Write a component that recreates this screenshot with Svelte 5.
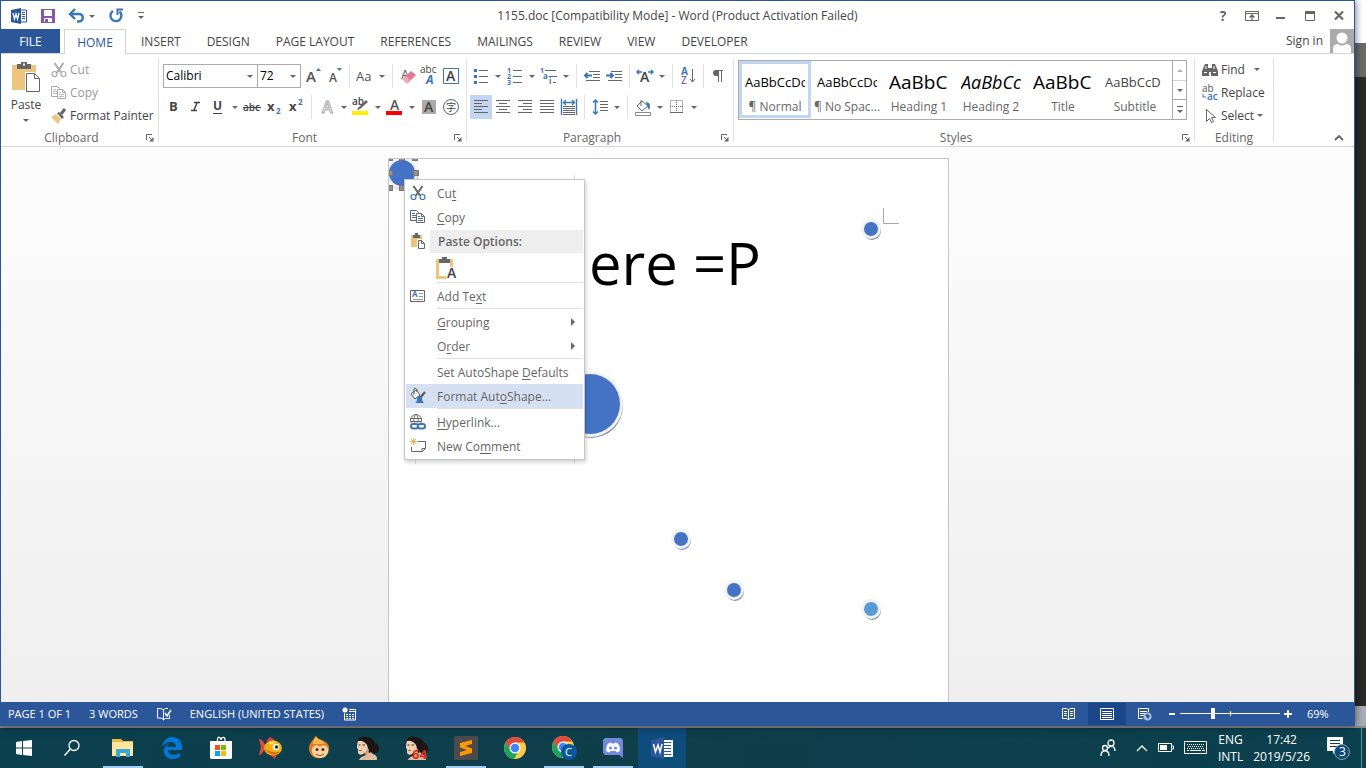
<script>
  const G = '#666';
  const B = '#3b76b5';
  const line = (x1, y, x2, c = G, w = 1) => `<path d="M${x1} ${y}.5H${x2}" stroke="${c}" stroke-width="${w}"/>`;
  const letter = (t, x, y, size, fill = '#555', extra = '') =>
    `<text x="${x}" y="${y}" font-size="${size}" fill="${fill}" font-family="Open Sans, sans-serif" ${extra}>${t}</text>`;
  const svg = (w, h, body) =>
    `<svg width="${w}" height="${h}" viewBox="0 0 ${w} ${h}" fill="none" aria-hidden="true" style="display:block;overflow:visible">${body}</svg>`;
  const tool = (body) => svg(22, 24, body);
  const small = (body) => svg(16, 16, body);

  const scissors = (c, d) =>
    small(`<path d="M3.500 1 10 10.500M12.500 1 6 10.500" stroke="${c}" stroke-width="2"/><circle cx="3.500" cy="12" r="2.500" stroke="${d}" stroke-width="1.200"/><circle cx="12.500" cy="12" r="2.500" stroke="${d}" stroke-width="1.200"/>`);
  const copy = (c, d) =>
    small(`<path d="M.5 1.500h6l2 2v8h-8z" fill="#fff" stroke="${c}"/><path d="M2 4.500h3M2 6.500h4M2 8.500h4" stroke="${d}"/><path d="M6.500 4.500h5l3 3v6h-8z" fill="#fff" stroke="${c}"/><path d="M11.500 4.500v3h3" stroke="${c}"/><path d="M8 7.500h2M8 9.500h5M8 11.500h5" stroke="${d}"/>`);
  const head = (red) =>
    svg(24, 24, `<path d="M3 24c1-3 5-4 7-5l-1-3 6-3c0 4 1 5 4 6 2 1 2 3 2 5z" fill="#e3bb9b"/><path d="M2 5c-1 3-1 4-1 7l1 1v4c1 2 3 2 5 1l6-5 1-7-5-4z" fill="#efd0b4"/><path d="M1 5C2 1 6 0 10 1c5 0 8 3 9 6 3 1 5 4 4 7-1 4-5 4-7 2l-3 1c-1-3-1-5-2-8C9 6 6 4 1 5z" fill="#1c1514"/><path d="M2.500 9h2M6.500 9h2.500" stroke="#4b2d22"/><path d="M3 14.500h3" stroke="#b9574c"/><path d="M11 10c1 3 0 6-3 8l3 1 2-5z" fill="#cf9f7f"/>${red ? letter('64', 7, 23, 13, '#d62c1b', 'font-weight="700"') : ''}`);
  const chrome = `<circle cx="12" cy="12" r="11" fill="#ffcd45"/><path d="M2.500 6.500A11 11 0 0 0 11 23l5-8.500-8 0z" fill="#1ca45c"/><path d="M12 6.500h9.500A11 11 0 0 0 2.500 6.500L7.500 14z" fill="#dd4b3e"/><circle cx="12" cy="12" r="5.500" fill="#fff"/><circle cx="12" cy="12" r="4.300" fill="#4285f4"/>`;

  const ic = {
    word: small(`<path d="M9 2h6.500v12H9z" fill="#fff" stroke="#2b579a"/><path d="M11 4.500h3M11 6.500h3M11 8.500h3M11 10.500h3" stroke="#2b579a"/><path d="M0 2 10 0v16L0 14z" fill="#2b579a"/><path d="m2 5 1.500 6L5 6l1.500 5L8 5" stroke="#fff" stroke-width="1.300"/>`),
    save: small(`<path d="M1 1h14v14H1z" fill="#8656aa"/><path d="M4 2h8v6H4zM4 10h8v4H4z" fill="#fff"/><path d="M5 11h3v3H5z" fill="#8656aa"/>`),
    undo: small(`<path d="M2 6h8c5 0 5 7 0 7.500H8" stroke="${B}" stroke-width="2.400"/><path d="m6 1-5 5 5 5" stroke="${B}" stroke-width="2.400"/>`),
    redo: small(`<path d="M5 3a5.500 5.500 0 1 0 6.500 .5" stroke="${B}" stroke-width="2.400"/><path d="M15 1.500H9.500V7" stroke="${B}" stroke-width="2"/>`),
    custom: svg(8, 10, `<path d="M1 1.500h6" stroke="#666"/><path d="M1 5h6L4 8z" fill="#666"/>`),
    display: small(`<path d="M1.500 3.500h13v9h-13zM1.500 5.500h13" stroke="#666"/><path d="M8 12V7M5.500 9.500 8 7l2.500 2.500" stroke="#666" stroke-width="1.300"/>`),
    min: small(`<path d="M3 10h9" stroke="#666" stroke-width="2"/>`),
    max: small(`<path d="M3.500 3.500h9v9h-9z" stroke="#666"/><path d="M3 4.500h10" stroke="#666" stroke-width="3"/>`),
    close: small(`<path d="m4 3.500 8 8M12 3.500l-8 8" stroke="#666" stroke-width="2.200"/>`),
    user: svg(24, 24, `<path d="M0 0h24v24H0z" fill="#ababab"/><circle cx="12" cy="9" r="5.500" fill="#fff"/><path d="M3 24v-5c0-2 2-4 5-4 2 2 6 2 8 0 3 0 5 2 5 4v5z" fill="#fff"/>`),
    paste: svg(30, 32, `<path d="M1 4h24v25H1z" fill="#ecc57e"/><path d="M6 3h4V1h6v2h4v5H6z" fill="#666"/><path d="M12 2.500h2v2h-2z" fill="#fff"/><path d="M14 11h10l6 6v15H14z" fill="#fff"/><path d="M15.500 12.500h8l5 5v13h-13z" fill="#fff" stroke="#666"/><path d="M23.500 12.500v5h5" stroke="#666"/>`),
    cutGrey: scissors('#aaa', '#aaa'),
    copyGrey: copy('#aaa', '#bbb'),
    brush: small(`<path d="m0 9 5-3 5 5-3 5z" fill="#ecc57e"/><path d="m6 5 2-1 5 5-2 2z" fill="#666"/><path d="m10 6 4-5" stroke="#666" stroke-width="3"/>`),
    grow: tool(letter('A', 5, 18, 15, '#555', 'font-weight="600"') + `<path d="m15 7 2.500-3L20 7z" fill="${B}"/>`),
    shrink: tool(letter('A', 6, 18, 12, '#555', 'font-weight="600"') + `<path d="m14 4 2.500 3L19 4z" fill="${B}"/>`),
    case: tool(letter('Aa', 2, 17, 13, '#555', 'font-weight="500"')),
    erase: tool(letter('A', 4, 15, 13) + `<path d="m6 14 8-7 5 4-8 8z" fill="#e37c91"/><path d="m5 15 4-3 4 4-3 4z" fill="#eeaab8"/>`),
    phon: tool(letter('abc', 1, 9, 10, '#444', 'font-weight="500"') + letter('A', 7, 20, 12, B, 'font-weight="700" font-style="italic"')),
    boxA: tool(`<path d="M2.500 4.500h15v15h-15z" stroke="${B}"/>` + letter('A', 5, 17, 14, '#444', 'font-weight="600"')),
    bold: tool(letter('B', 6, 16, 13, '#444', 'font-weight="700"')),
    italic: tool(`<path d="M9 7.500h6M6 15.500h6M12.500 7l-4 9" stroke="#444" stroke-width="1.500"/>`),
    under: tool(letter('U', 6, 15, 12, '#444', 'font-weight="700"') + line(6, 18, 15, '#444')),
    strike: tool(letter('abc', 2, 16, 10, '#444', 'font-weight="600"') + line(2, 12, 20, '#444')),
    sub: tool(letter('x', 4, 16, 13, '#444', 'font-weight="700"') + letter('2', 13, 19, 8, B, 'font-weight="700"')),
    sup: tool(letter('x', 4, 16, 13, '#444', 'font-weight="700"') + letter('2', 13, 10, 8, B, 'font-weight="700"')),
    glow: tool(`<text x="6" y="18" font-size="16" font-family="Open Sans" font-weight="600" fill="#fff" stroke="#aaa" stroke-width="1">A</text>`),
    high: tool(letter('ab', 2, 10, 10, '#444', 'font-weight="600"') + `<path d="m8 13 8-8 2 2-8 7-3 1z" fill="#666"/><path d="M2 16h16v4H2z" fill="#ffef00"/>`),
    color: tool(letter('A', 6, 15, 14, '#555', 'font-weight="600"') + `<path d="M2 16h16v4H2z" fill="#f00"/>`),
    shadeA: tool(`<path d="M4 5h14v14H4z" fill="#aaa"/>` + letter('A', 6, 17, 14, '#444', 'font-weight="600"')),
    circle: tool(`<circle cx="11" cy="12" r="7.500" stroke="#666"/><text x="6" y="16" font-size="10" fill="#444" font-family="Noto Sans CJK SC">字</text>`),
    bullets: tool(`<path d="M4 5h3v3H4zM4 11h3v3H4zM4 17h3v3H4z" fill="${B}"/>` + line(9, 6, 18) + line(9, 12, 18) + line(9, 18, 18)),
    numbers: tool(letter('1', 3, 9, 7, B, 'font-weight="700"') + letter('2', 3, 15, 7, B, 'font-weight="700"') + letter('3', 3, 21, 7, B, 'font-weight="700"') + line(9, 6, 18) + line(9, 12, 18) + line(9, 18, 18)),
    multi: tool(letter('1', 2, 9, 7, B, 'font-weight="700"') + letter('a', 5, 15, 8, B, 'font-weight="700"') + letter('i', 11, 20, 8, B, 'font-weight="700"') + line(7, 6, 18) + line(11, 12, 19) + line(15, 18, 18)),
    outdent: tool(line(8, 7, 19) + line(12, 10, 19) + line(12, 13, 19) + line(5, 16, 19) + `<path d="M11 11.500H4M6.500 9 4 11.500 6.500 14" stroke="${B}" stroke-width="2"/>`),
    indent: tool(line(8, 7, 19) + line(12, 10, 19) + line(12, 13, 19) + line(5, 16, 19) + `<path d="M3 11.500h7M7.500 9 10 11.500 7.500 14" stroke="${B}" stroke-width="2"/>`),
    asian: tool(letter('A', 6, 18, 14, '#444', 'font-weight="600"') + `<path d="M8 8H3M5 6 3 8l2 2M14 8h5M17 6l2 2-2 2" stroke="${B}" stroke-width="1.500"/>`),
    sort: tool(letter('A', 4, 11, 10, B, 'font-weight="700"') + letter('Z', 4, 20, 10, '#8656aa', 'font-weight="600"') + `<path d="M15.500 5v13M13 15l2.500 3 2.500-3" stroke="#666"/>`),
    pilcrow: tool(`<path d="M8 6.500h7M10.500 6v12M13.500 6v12" stroke="#666"/><path d="M10 6H8a3 3 0 0 0 0 6h2z" fill="#666"/>`),
    left: tool([5, 8, 11, 14, 17].map((y, i) => line(4, y, i % 2 ? 12 : 18)).join('')),
    center: tool([5, 8, 11, 14, 17].map((y, i) => (i % 2 ? line(7, y, 15) : line(4, y, 18))).join('')),
    right: tool([5, 8, 11, 14, 17].map((y, i) => line(i % 2 ? 9 : 4, y, 18)).join('')),
    justify: tool([5, 8, 11, 14, 17].map((y) => line(4, y, 18)).join('')),
    distrib: tool(`<path d="M3.500 4v16M18.500 4v16M5 7.500h12M8 5 5.500 7.500 8 10M14 5l2.500 2.500L14 10" stroke="${B}" stroke-width="1.400"/>` + [11, 13, 15, 17, 19].map((y) => line(5, y, 17)).join('')),
    spacing: tool(`<path d="M6.500 5v14M4 7.500 6.500 5 9 7.500M4 16.500 6.500 19 9 16.500" stroke="${B}" stroke-width="1.500"/>` + [6, 9, 12, 15].map((y) => line(11, y, 19)).join('')),
    shading: tool(`<path d="m5 11 5-5 6 5-6 5zM9 11V5" stroke="#666" fill="#fff"/><path d="M14 7c4 0 5 4 3 8l-2-4z" fill="${B}"/><path d="M3.500 17.500h15v3h-15z" stroke="#888"/>`),
    border: tool(`<path d="M4.500 5.500h12v12h-12zM10.500 5v13M4 11.500h13" stroke="#666" stroke-dasharray="1 1"/>` + line(4, 17, 17)),
    find: small(`<path d="M3 2h3v4h4V2h3l3 7v5H9v-4H7v4H0V9z" fill="#666"/><path d="M2 10.500h3M11 10.500h3M4 4v3M12 4v3" stroke="#fff"/>`),
    replace: svg(16, 18, letter('ab', 0, 8, 10, '#555') + letter('ac', 5, 16, 10, B, 'font-weight="600"') + `<path d="M1 10v3h3" stroke="${B}"/>`),
    select: small(`<path d="M4.500 1.500v12l3-3 2 4 2-1-2-4h4z" fill="#fff" stroke="#666"/>`),
    launch: svg(8, 8, `<path d="M.5 6V.5H6M3 3l3 3" stroke="#666"/><path d="M7.500 3v4.500H3z" fill="#666"/>`),
    up: svg(10, 6, `<path d="m1 5 4-4 4 4" stroke="#666" stroke-width="1.800"/>`),
    cut: scissors('#666', B),
    copy: copy('#666', B),
    pasteSmall: small(`<path d="M1 2h11v12H1z" fill="#ecc57e"/><path d="M3 2h2V0h3v2h2v3H3z" fill="#666"/><path d="M7 6h5l4 4v6H7z" fill="#fff"/><path d="M8.500 7.500h3l3 3v5h-6z" fill="#fff" stroke="#666"/><path d="M11.500 7.500v3h3" stroke="#666"/>`),
    pasteText: svg(24, 24, `<path d="M2.500 4.500h14v17h-14z" fill="#fff" stroke="#ecc57e" stroke-width="3"/><path d="M4 3h3V1h5v2h3v4H4z" fill="#666"/><path d="M11 11h11v13H11z" fill="#fff"/>` + letter('A', 12, 22, 14, '#444', 'font-weight="600"')),
    addText: small(`<path d="M.5 2.500h14v11H.5z" stroke="#666" fill="#fff"/><path d="M9 5.500h4M9 8.500h4M3 11.500h10" stroke="#999"/>` + letter('A', 2, 9, 8, B, 'font-weight="700"')),
    format: small(`<path d="M1 6 6 2l4 5-5 4zM4 7V1c0-1 3-1 3 1v2" stroke="#555" fill="#fff"/><path d="m15 4-5 6" stroke="#555" stroke-width="2"/><path d="M8 8c3 0 5 2 4 4l2 3H5c3-1 1-4 3-7z" fill="${B}"/>`),
    link: small(`<circle cx="6" cy="6" r="5.500" stroke="#666"/><path d="M.5 4.500h11M.5 7.500h11M6 .5c-3 3-3 7 0 11 3-4 3-8 0-11z" stroke="#666"/><path d="M0 9h16v7H0z" fill="#fff"/><rect x="1" y="10" width="7" height="4.500" rx="2.200" stroke="${B}" stroke-width="2"/><rect x="8" y="10" width="7" height="4.500" rx="2.200" stroke="${B}" stroke-width="2"/>`),
    comment: small(`<path d="M8 3.500h7.500v7l-3 3h-11V9M15 10.500h-3v3" stroke="#666"/><path d="M3.500 0v7M0 3.500h7M1 1l5 5M6 1 1 6" stroke="#e7b45a"/>`),
    proof: small(`<path d="M7.500 13.500 5 12H1.500V2.500H5l2.500 1.500v10l2-1.500h4V9M7.500 4 9 2.500h3" stroke="#fff"/><path d="m9 7 2 3 4-6" stroke="#fff" stroke-width="1.500"/>`),
    macro: svg(14, 14, `<path d="M2.500 6v7h11V2.500H7" stroke="#fff"/><circle cx="3" cy="3" r="2.500" fill="#fff"/><path d="M7 4.500h6M4 7.500h2M7 7.500h2M10 7.500h2M4 9.500h2M7 9.500h2M10 9.500h2M4 11.500h2M7 11.500h2M10 11.500h2" stroke="#fff"/>`),
    read: svg(14, 14, `<path d="M6.500 13V3L5 1.500H.5v10H5L6.500 13 8 11.500h4.500v-10H8L6.500 3M2 4.500h3M2 6.500h3M2 8.500h3M8 4.500h3M8 6.500h3M8 8.500h3" stroke="#fff"/>`),
    print: svg(14, 14, `<path d="M.5 1.500h13v11H.5zM2 4.500h10M2 6.500h10M2 8.500h10M2 10.500h10" stroke="#fff"/>`),
    web: svg(14, 14, `<path d="M5 11.500H.5v-10h10V5M2 4.500h7M2 6.500h5M2 8.500h4" stroke="#fff"/><circle cx="9.500" cy="9.500" r="4" fill="#a9bfe0"/><path d="m7 8 3-1 2 2-2 3z" fill="#2b579a"/>`),
    people: svg(16, 18, `<circle cx="11" cy="4" r="3" stroke="#fff" stroke-width="1.300"/><circle cx="5" cy="9" r="2.500" stroke="#fff" stroke-width="1.300"/><path d="M1 17c0-7 8-7 8 0M8 9c3-3 7-2 7 3" stroke="#fff" stroke-width="1.300"/>`),
    chev: svg(12, 8, `<path d="m1 7 5-5 5 5" stroke="#fff" stroke-width="1.300"/>`),
    battery: svg(16, 10, `<path d="M.5.5h13v8H.5zM14 3h1.500v3H14" stroke="#fff"/><path d="M2 2h7v5H2z" fill="#fff"/>`),
    keyboard: svg(24, 14, `<path d="M.5.500h22v12H.5z" stroke="#fff"/><path d="M3 3.500h18M4 5.500h16M3 7.500h18" stroke="#fff" stroke-dasharray="1 1"/><path d="M3 9.500h2M6 9.500h11M18 9.500h3" stroke="#fff"/>`),
    notify: svg(26, 26, `<path d="M1 2h16v14h-7l-3 3v-3H1z" fill="#fff"/><path d="M4 5.500h10M4 8.500h10M4 11.500h7" stroke="#0c3f4c"/><circle cx="16" cy="17" r="7.500" fill="#0f4a78" stroke="#829eae"/>` + letter('3', 13, 21, 12, '#fff')),
    win: svg(18, 18, `<path d="m1 3 6-1v6.500H1zM8 2l9-1v7.500H8zM1 9.500h6V16l-6-1zM8 9.500h9V17l-9-1z" fill="#fff"/>`),
    search: svg(18, 18, `<circle cx="11" cy="6.500" r="5" stroke="#fff" stroke-width="1.300"/><path d="m7.500 10-6 6.500" stroke="#fff" stroke-width="1.400"/>`),
    folder: svg(24, 24, `<path d="M1 3h9l2 2h10v5H1z" fill="#e8bb4b"/><path d="M1 6h21v14H1z" fill="#ffe69b"/><path d="M5 21v-8h14v8h-4v-4H9v4z" fill="#35a9dd"/>`),
    edge: svg(24, 24, `<path d="M2 11C3 4 8 1 12 1c6 0 10 4 10 10v3H8c0 6 8 6 12 3v4c-7 4-16 2-16-6 0-4 3-7 6-8-2 1-3 3-3 4h9c0-6-9-7-14 0z" fill="#0078d7"/>`),
    store: svg(24, 24, `<path d="M1 5h22v17l-1 1H2l-1-1z" fill="#fff"/><path d="M8.500 6V3.500C8.500 0 12 1 12 4M12 4c0-3 4-4 4-.5V6" stroke="#fff" stroke-width="1.300"/><path d="M6 9h5v5H6z" fill="#f25022"/><path d="M12 9h5v5h-5z" fill="#7fba00"/><path d="M6 15h5v5H6z" fill="#00a4ef"/><path d="M12 15h5v5h-5z" fill="#ffb900"/>`),
    fish: svg(24, 24, `<path d="M1 3c4 1 5 4 7 7l-2 4c-1 3-3 5-5 5l2-8z" fill="#d94b43"/><path d="m8 5 4-4 5 3v4zM11 18l6 5 2-5z" fill="#dd3e45"/><ellipse cx="15" cy="12" rx="9" ry="7.500" fill="#f6aa16"/><path d="M7 13c4 6 11 7 15 3-6 1-10 0-15-3z" fill="#c9690c"/><path d="M10 7c3-2 6-2 8-1l-5 3z" fill="#ffe057"/><circle cx="18" cy="11" r="3.300" fill="#fff"/><circle cx="18.500" cy="11" r="2" fill="#4a8b2a"/><circle cx="18.500" cy="11" r="1" fill="#111"/>`),
    monkey: svg(24, 24, `<path d="M9 0c1 3 4 3 8 5 6 3 6 8 4 12-4 7-15 7-18 0C0 10 4 6 9 0z" fill="#e07b26"/><path d="M9 0c1 4 6 3 9 8L6 8c0-3 1-5 3-8z" fill="#ffb545"/><path d="M5 13c1-4 6-5 8-2 2-3 7-2 8 2 1 4-2 9-8 9-5 0-9-4-8-9z" fill="#f7d3a1"/><circle cx="10" cy="13.500" r="1.500" fill="#542d18"/><circle cx="16" cy="13.500" r="1.500" fill="#542d18"/><path d="M9 18c3 2 5 2 8 0" stroke="#8b4c25"/>`),
    face: head(false),
    face64: head(true),
    sublime: svg(24, 24, `<rect width="24" height="24" rx="1" fill="#4b4b4b"/><path d="m6 7 12-3v4l-7 2 7 2.500v4.500L6 20v-4l7-2-7-2.500z" fill="#ff9800"/>`),
    chrome: svg(24, 24, chrome),
    chromeC: svg(26, 26, chrome + `<circle cx="18" cy="17" r="8" fill="#0b579b"/>` + letter('C', 14, 21, 11, '#fff')),
    discord: svg(22, 22, `<path d="M3 1h16l2 2v18l-4-3H3l-2-2V3z" fill="#7289da"/><path d="M4 14c0-4 1-7 3-8l2-.5 .5 1h3l.5-1 2 .5c2 1 3 4 3 8l-3 1.500-1.500-1.500h-5L7 15.500z" fill="#fff"/><circle cx="8.500" cy="11" r="1.500" fill="#7289da"/><circle cx="13.500" cy="11" r="1.500" fill="#7289da"/>`),
    wordBig: svg(24, 22, `<path d="M12 3h11v17H12z" fill="#fff"/><path d="M14 5.500h7M14 8.500h7M14 11.500h7M14 14.500h7M14 17.500h7" stroke="#2b579a"/><path d="M1 3 14 0v22L1 19z" fill="#2b579a"/><path d="m3.500 7 2 8L8 8l2 7 2-8" stroke="#fff" stroke-width="1.500"/>`)
  };

  const tabs = ['INSERT', 'DESIGN', 'PAGE LAYOUT', 'REFERENCES', 'MAILINGS', 'REVIEW', 'VIEW', 'DEVELOPER'];
  const fontTop = ['grow', 'shrink', '|', 'case', 'v', '|', 'erase', 'phon', 'boxA'];
  const fontLow = ['bold', 'italic', 'under', 'v', 'strike', 'sub', 'sup', '|', 'glow', 'v', 'high', 'v', 'color', 'v', 'shadeA', 'circle'];
  const paraTop = ['bullets', 'v', 'numbers', 'v', 'multi', 'v', '|', 'outdent', 'indent', '|', 'asian', 'v', '|', 'sort', '|', 'pilcrow'];
  const paraLow = ['left', 'center', 'right', 'justify', 'distrib', '|', 'spacing', 'v', '|', 'shading', 'v', 'border', 'v'];
  const styles = [
    ['AaBbCcDc', '¶ Normal', 'body'],
    ['AaBbCcDc', '¶ No Spac...', 'body'],
    ['AaBbC', 'Heading 1', 'big'],
    ['AaBbCc', 'Heading 2', 'slant'],
    ['AaBbC', 'Title', 'big'],
    ['AaBbCcD', 'Subtitle', 'light']
  ];
  const menu = [
    { icon: 'cut', text: ['Cu', 't', ''] },
    { icon: 'copy', text: ['', 'C', 'opy'] },
    { head: 'Paste Options:' },
    { paste: true },
    { sep: true },
    { icon: 'addText', text: ['Add Te', 'x', 't'] },
    { sep: true },
    { text: ['', 'G', 'rouping'], sub: true },
    { text: ['O', 'r', 'der'], sub: true },
    { sep: true },
    { text: ['Set AutoShape ', 'D', 'efaults'] },
    { icon: 'format', text: ['Format Aut', 'o', 'Shape...'], active: true },
    { sep: true },
    { icon: 'link', text: ['', 'H', 'yperlink...'] },
    { icon: 'comment', text: ['New Co', 'm', 'ment'] }
  ];
  const apps = [
    ['folder', true], ['edge'], ['store'], ['fish'], ['monkey'], ['face'], ['face64'],
    ['sublime', true], ['chrome'], ['chromeC', true], ['discord', true], ['wordBig', true]
  ];
  const dots = [
    { x: 482, y: 70, r: 7, c: '#4472c4' },
    { x: 292, y: 380, r: 7, c: '#4472c4' },
    { x: 345, y: 431, r: 7, c: '#4472c4' },
    { x: 482, y: 450, r: 7, c: '#5b9bd5' },
    { x: 201, y: 245, r: 30, c: '#4472c4' },
    { x: 13, y: 14, r: 13, c: '#4472c4' }
  ];
  const handles = [[1, -1], [13, -1], [26, -1], [1, 14], [27, 14], [1, 29], [13, 29]];
</script>

{#snippet strip(items, chosen)}
  {#each items as item}
    {#if item === '|'}<span class="bar"></span>
    {:else if item === 'v'}<button class="arrow" aria-label="More"><i class="caret"></i></button>
    {:else}<button class="tool" class:chosen={item === chosen} aria-label={item}>{@html ic[item]}</button>{/if}
  {/each}
{/snippet}

{#snippet foot(name, launcher)}
  <div class="foot"><span>{name}</span>{#if launcher}<button class="launch" aria-label="{name} settings">{@html ic.launch}</button>{/if}</div>
{/snippet}

<div class="screen">
  <div class="desktop">
    <main class="window">
      <header class="titlebar">
        <div class="quick">
          {@html ic.word}
          <button aria-label="Save">{@html ic.save}</button>
          <button class="pair" aria-label="Undo">{@html ic.undo}<i class="caret"></i></button>
          <button aria-label="Repeat">{@html ic.redo}</button>
          <button aria-label="Customize">{@html ic.custom}</button>
        </div>
        <h1>1155.doc [Compatibility Mode] - Word (Product Activation Failed)</h1>
        <div class="controls">
          <button class="help" aria-label="Help">?</button>
          <button aria-label="Ribbon display">{@html ic.display}</button>
          <button aria-label="Minimize">{@html ic.min}</button>
          <button aria-label="Maximize">{@html ic.max}</button>
          <button aria-label="Close">{@html ic.close}</button>
        </div>
      </header>

      <nav class="tabs">
        <button class="file">FILE</button>
        <button class="home">HOME</button>
        {#each tabs as t}<button class="tab">{t}</button>{/each}
        <a class="signin" href="#signin">Sign in {@html ic.user}</a>
      </nav>

      <section class="ribbon">
        <div class="group clipboard">
          <div class="content clip">
            <button class="paste">{@html ic.paste}<span>Paste</span><i class="caret"></i></button>
            <div class="stack">
              <button class="off">{@html ic.cutGrey}Cut</button>
              <button class="off">{@html ic.copyGrey}Copy</button>
              <button>{@html ic.brush}Format Painter</button>
            </div>
          </div>
          {@render foot('Clipboard', true)}
        </div>
        <div class="group font">
          <div class="content rows">
            <div class="row">
              <div class="combo name"><input aria-label="Font" value="Calibri" /><i class="caret"></i></div>
              <div class="combo size"><input aria-label="Font size" value="72" /><i class="caret"></i></div>
              {@render strip(fontTop)}
            </div>
            <div class="row">{@render strip(fontLow)}</div>
          </div>
          {@render foot('Font', true)}
        </div>
        <div class="group para">
          <div class="content rows">
            <div class="row">{@render strip(paraTop)}</div>
            <div class="row">{@render strip(paraLow, 'left')}</div>
          </div>
          {@render foot('Paragraph', true)}
        </div>
        <div class="group styles">
          <div class="content">
            <div class="gallery">
              {#each styles as [sample, name, kind], i}
                <button class="style" class:picked={i === 0}><span class="sample {kind}">{sample}</span><span class="label">{name}</span></button>
              {/each}
              <div class="scroller">
                <button aria-label="Up" class="dim"><i class="caret flip"></i></button>
                <button aria-label="Down"><i class="caret"></i></button>
                <button aria-label="All styles">{@html ic.custom}</button>
              </div>
            </div>
          </div>
          {@render foot('Styles', true)}
        </div>
        <div class="group editing">
          <div class="content stack">
            <button>{@html ic.find}Find<i class="caret gap"></i></button>
            <button>{@html ic.replace}Replace</button>
            <button>{@html ic.select}Select<i class="caret"></i></button>
          </div>
          {@render foot('Editing', false)}
        </div>
        <button class="collapse" aria-label="Collapse ribbon">{@html ic.up}</button>
      </section>

      <section class="document">
        <div class="page">
          <p class="text">ere =P</p>
          <svg class="canvas" aria-hidden="true">
            <path d="M494.500 49v15.500H510" stroke="#aaa" fill="none" />
            <path d="M26.500 285v20M185.500 16v6M185.500 285v20" stroke="#ddd" fill="none" />
            {#each dots as d}
              <circle cx={d.x + 1} cy={d.y + 2} r={d.r + 2} fill="#8496b8" />
              <circle cx={d.x} cy={d.y} r={d.r + 3} fill="#f2f2f2" />
              <circle cx={d.x} cy={d.y} r={d.r} fill={d.c} />
            {/each}
            {#each handles as [x, y]}<rect x={x - 2.5} y={y - 2.5} width="5" height="5" fill="#909090" stroke="#777" />{/each}
          </svg>
          <div class="menu" role="menu">
            {#each menu as m}
              {#if m.sep}<div class="sep"></div>
              {:else if m.head}<div class="item"><span class="ico">{@html ic.pasteSmall}</span><b>{m.head}</b></div>
              {:else if m.paste}<button class="item pasteopt" aria-label="Keep text only">{@html ic.pasteText}</button>
              {:else}
                <button class="item" class:active={m.active} role="menuitem"><span class="ico">{#if m.icon}{@html ic[m.icon]}{/if}</span><span class="words">{m.text[0]}<u>{m.text[1]}</u>{m.text[2]}</span>{#if m.sub}<i class="side"></i>{/if}</button>
              {/if}
            {/each}
          </div>
        </div>
      </section>

      <footer class="status">
        <span>PAGE 1 OF 1</span>
        <span>3 WORDS</span>
        {@html ic.proof}
        <span>ENGLISH (UNITED STATES)</span>
        {@html ic.macro}
        <div class="views">
          <button aria-label="Read mode">{@html ic.read}</button>
          <button class="on" aria-label="Print layout">{@html ic.print}</button>
          <button aria-label="Web layout">{@html ic.web}</button>
          <button class="zoom" aria-label="Zoom out">{@html svg(8, 10, '<path d="M1 5h6" stroke="#fff" stroke-width="2"/>')}</button>
          <input type="range" aria-label="Zoom" min="10" max="190" value="69" />
          <button class="zoom" aria-label="Zoom in">{@html svg(8, 10, '<path d="M0 5h8M4 1v8" stroke="#fff" stroke-width="2"/>')}</button>
          <span class="percent">69%</span>
        </div>
      </footer>
    </main>
    <aside class="behind"></aside>
  </div>

  <footer class="taskbar">
    <button class="app" aria-label="Start">{@html ic.win}</button>
    <button class="app lens" aria-label="Search">{@html ic.search}</button>
    <div class="apps">
      {#each apps as [name, open], i}
        <button class="app" class:open class:front={i === apps.length - 1} aria-label={name}>{@html ic[name]}</button>
      {/each}
    </div>
    <div class="tray">
      <button aria-label="People" class="people">{@html ic.people}</button>
      <button aria-label="Hidden icons">{@html ic.chev}</button>
      <button aria-label="Battery">{@html ic.battery}</button>
      <button aria-label="Keyboard">{@html ic.keyboard}</button>
      <span class="two">ENG<br />INTL</span>
      <time class="two">17:42<br />2019/5/26</time>
      <button aria-label="Notifications" class="notify">{@html ic.notify}</button>
    </div>
  </footer>
</div>

<style>
  :global(body) { margin: 0; overflow: hidden; }
  .screen, .screen * { box-sizing: border-box; }
  .screen { height: 100vh; display: flex; flex-direction: column; font: 12px/16px "Open Sans", "Noto Sans", sans-serif; color: #444; }
  button, input { font: inherit; color: inherit; border: 0; background: none; padding: 0; margin: 0; }
  .caret { display: inline-block; flex: none; border: 3px solid transparent; border-top-color: #666; border-bottom: 0; }
  .flip { transform: rotate(180deg); }

  .desktop { flex: 1; min-height: 0; display: flex; padding-bottom: 2px; background: #8d8d8d; }
  .window { flex: 1; min-width: 0; display: flex; flex-direction: column; background: #fff; border: 1px solid #2b579a; position: relative; box-shadow: 0 0 8px rgba(0, 0, 0, 0.6); z-index: 1; }
  .behind { width: 11px; background: linear-gradient(#fff 43px, #6c6b67 43px, #6c6b67 77px, #2b2a26 77px, #2b2a26 calc(100% - 20px), #a9adb9 calc(100% - 20px)); }

  .titlebar { height: 28px; display: grid; grid-template-columns: 1fr auto 1fr; align-items: center; padding-top: 2px; }
  h1 { margin: 0; font: inherit; }
  .quick { display: flex; align-items: center; gap: 13px; padding-left: 10px; }
  .pair { display: flex; align-items: center; gap: 4px; }
  .controls { display: flex; justify-content: flex-end; align-items: center; gap: 13px; padding-right: 7px; }
  .help { width: 16px; font-weight: 700; font-size: 14px; color: #666; }

  .tabs { height: 25px; display: flex; border-bottom: 1px solid #d5d5d5; }
  .file, .home, .tab { padding-top: 2px; }
  .file { width: 59px; background: #2b579a; color: #fff; }
  .home { width: 62px; margin: 0 0 -1px 4px; border: 1px solid #d5d5d5; border-bottom: 0; background: #fff; color: #2b579a; }
  .tab { padding-left: 13px; padding-right: 13px; white-space: nowrap; }
  .home + .tab { margin-left: 2px; }
  .signin { margin-left: auto; display: flex; align-items: center; gap: 7px; color: inherit; text-decoration: none; }

  .ribbon { height: 93px; display: flex; padding-top: 4px; border-bottom: 1px solid #d5d5d5; position: relative; }
  .group { display: flex; flex-direction: column; height: 84px; border-right: 1px solid #e1e1e1; }
  .content { height: 72px; flex: none; }
  .foot { display: grid; grid-template-columns: 1fr 16px; line-height: 16px; height: 12px; text-align: center; color: #666; }
  .launch { height: 16px; display: flex; align-items: center; justify-content: center; }
  .clipboard { width: 158px; }
  .font { width: 308px; }
  .para { width: 267px; }
  .styles { width: 461px; }
  .editing { width: 79px; }
  .editing .foot { grid-template-columns: 1fr; }
  .clip { display: flex; }
  .paste { width: 50px; display: flex; flex-direction: column; align-items: center; gap: 4px; padding-top: 3px; }
  .paste .caret { margin-top: 2px; }
  .stack { display: flex; flex-direction: column; }
  .stack button { display: flex; align-items: center; gap: 3px; height: 23px; white-space: nowrap; }
  .stack .off { color: #999; }
  .editing .stack { padding-left: 7px; }
  .gap { margin-left: 6px; }
  .rows { display: flex; flex-direction: column; gap: 7px; padding: 6px 0 0 4px; }
  .para .rows { padding-left: 3px; }
  .row { display: flex; height: 24px; }
  .tool { width: 22px; height: 24px; flex: none; }
  .arrow { width: 12px; flex: none; display: flex; align-items: center; justify-content: center; }
  .chosen { background: #c2d5f2; }
  .bar { width: 1px; margin: 0 4px; background: #e1e1e1; flex: none; }
  .combo { display: flex; align-items: center; height: 24px; border: 1px solid #ababab; padding: 0 4px 0 2px; color: #000; }
  .combo input { min-width: 0; flex: 1; }
  .name { width: 95px; }
  .size { width: 43px; border-left: 0; }

  .gallery { display: flex; height: 60px; margin: 2px 7px 0 4px; border: 1px solid #ababab; }
  .style { width: 72px; height: 57px; flex: none; display: flex; flex-direction: column; align-items: center; }
  .picked { box-shadow: inset 0 0 0 3px #c2d5f2; }
  .sample { width: 60px; height: 39px; line-height: 42px; overflow: hidden; white-space: nowrap; color: #000; text-align: left; }
  .body { font-size: 13px; }
  .big { font-size: 19px; font-weight: 500; }
  .slant { font-size: 18px; font-style: italic; font-weight: 500; }
  .light { font-size: 13px; color: #444; }
  .label { line-height: 14px; white-space: nowrap; color: #666; }
  .scroller { margin-left: auto; width: 14px; display: flex; flex-direction: column; border-left: 1px solid #ababab; }
  .scroller button { flex: 1; display: flex; align-items: center; justify-content: center; border-bottom: 1px solid #ababab; }
  .scroller button:last-child { border: 0; }
  .dim { opacity: 0.5; }
  .collapse { position: absolute; right: 10px; bottom: 5px; }

  .document { flex: 1; min-height: 0; overflow: hidden; padding: 11px 18px 0 0; background: linear-gradient(#fdfdfd, #efefef); }
  .page { position: relative; width: 561px; height: 800px; margin: 0 auto; padding: 64px 0 0 200px; background: #fff; border: 1px solid #c6c6c6; }
  .text { margin: 0; font-size: 58px; line-height: 80px; color: #000; white-space: nowrap; }
  .canvas { position: absolute; inset: 0; width: 100%; height: 100%; }
  .menu { position: absolute; left: 15px; top: 20px; width: 181px; padding: 1px; background: #fff; border: 1px solid #c6c6c6; box-shadow: 1px 2px 4px rgba(0, 0, 0, 0.2); }
  .item { width: 100%; height: 24px; display: flex; align-items: center; text-align: left; white-space: pre; color: #666; }
  .item b { flex: 1; height: 23px; line-height: 23px; padding-left: 8px; margin-left: -7px; background: #eee; font-weight: 600; }
  .ico { width: 31px; padding-left: 4px; flex: none; }
  .words { flex: 1; padding-top: 1px; }
  .item u { text-underline-offset: 2px; }
  .item.active { background: #d5e1f2; }
  .pasteopt { height: 29px; padding-left: 29px; }
  .sep { height: 2px; margin-left: 31px; border-top: 1px solid #e1e1e1; }
  .side { border: 4px solid transparent; border-left-color: #666; border-right: 0; margin-right: 8px; }

  .status { height: 23px; flex: none; display: flex; align-items: center; gap: 18px; padding-left: 7px; background: #2b579a; color: #fff; white-space: nowrap; font-size: 11px; }
  .views { margin-left: auto; display: flex; align-items: center; height: 100%; }
  .views button { width: 38px; height: 22px; display: flex; align-items: center; justify-content: center; }
  .views .on { background: #19478a; }
  .views .zoom { width: 16px; }
  .percent { width: 58px; padding-left: 11px; }
  input[type="range"] { appearance: none; width: 100px; height: 12px; background: linear-gradient(#fff, #fff) center / 100% 1px no-repeat, linear-gradient(#fff, #fff) center / 1px 5px no-repeat; }
  input[type="range"]::-webkit-slider-thumb { appearance: none; width: 4px; height: 11px; background: #fff; }

  .taskbar { height: 40px; display: flex; background: linear-gradient(90deg, #0b404e, #103e4b 50%, #0b404e); color: #fff; }
  .app { width: 48px; height: 40px; flex: none; display: flex; align-items: center; justify-content: center; }
  .apps { display: flex; gap: 1px; margin-left: 3px; }
  .open { background: linear-gradient(#a0cdf0, #a0cdf0) center bottom / 40px 2px no-repeat; }
  .front { background: #0e4c7c; }
  .tray { margin-left: auto; display: flex; align-items: center; gap: 10px; border-right: 1px solid #6d8d96; margin-right: 4px; padding-right: 9px; }
  .people { margin-right: 10px; }
  .two { line-height: 17px; text-align: center; }
  .notify { margin-left: 6px; }
</style>
